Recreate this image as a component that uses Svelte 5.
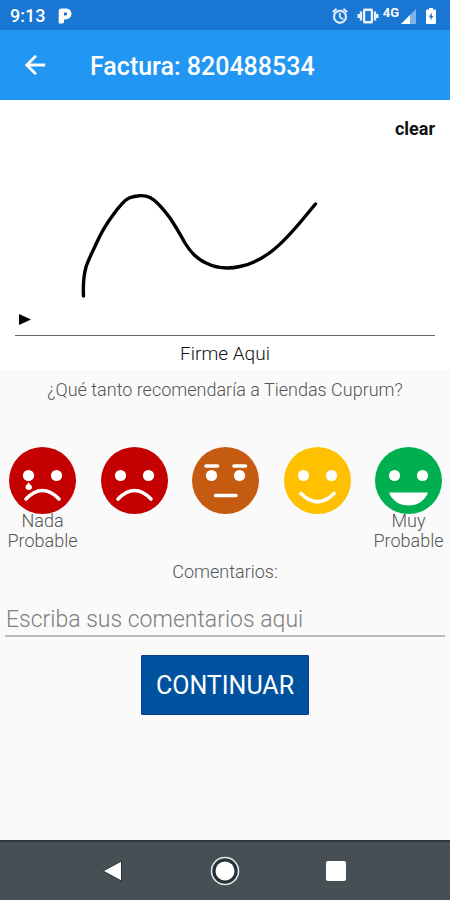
<script>
  const faces = [
    { kind: 'crying', color: '#c40000', label: 'Nada Probable', caption: true },
    { kind: 'sad', color: '#c40000', label: 'Poco probable', caption: false },
    { kind: 'neutral', color: '#c55a11', label: 'Neutral', caption: false },
    { kind: 'happy', color: '#ffc000', label: 'Algo probable', caption: false },
    { kind: 'delighted', color: '#00b050', label: 'Muy Probable', caption: true }
  ];
  let signed = $state(true);
  let rating = $state('');
  let comment = $state('');
</script>

<div class="screen">
  <div class="status">
    <span class="time">9:13</span>
    <svg class="pandora" width="14" height="16" viewBox="0 0 14 16" aria-hidden="true">
      <path fill="#fff" fill-rule="evenodd" d="M3.5 0.5H7.5C11.3 0.5 13.5 2.700 13.5 5.800C13.500 9.300 10.800 11.500 7.400 11.500H6V13.500C6 15 5.200 15.600 4 15.600H0.700V3.500C0.700 1.500 1.500 0.500 3.500 0.500ZM6 4.600V7.600H7C8.300 7.600 9.100 7 9.100 6C9.100 5 8.400 4.600 7.300 4.600Z" />
    </svg>
    <div class="indicators">
      <svg width="18" height="18" viewBox="0 0 24 24" aria-hidden="true">
        <path fill="#e8f1fb" stroke="#e8f1fb" stroke-width="0.800" d="M22 5.72l-4.6-3.86-1.29 1.53 4.6 3.86L22 5.72zM7.88 3.39L6.6 1.86 2 5.71l1.29 1.53 4.59-3.85zM12.5 8H11v6l4.75 2.85.75-1.23-4-2.37V8zM12 4c-4.97 0-9 4.03-9 9s4.02 9 9 9a9 9 0 0 0 0-18zm0 16c-3.87 0-7-3.13-7-7s3.13-7 7-7 7 3.13 7 7-3.13 7-7 7z" />
      </svg>
      <svg class="vibrate" width="22" height="18" viewBox="0 0 22 18" aria-hidden="true">
        <path fill="#e8f1fb" fill-rule="evenodd" d="M7.5 1.5H14.5Q16 1.5 16 3V15Q16 16.5 14.5 16.5H7.5Q6 16.5 6 15V3Q6 1.5 7.5 1.5ZM8.3 4V14H13.7V4Z" />
        <path fill="#e8f1fb" d="M2.800 4.500H5.200V13.500H2.800ZM0.500 7H2.800V11H0.500ZM16.800 4.500H19.200V13.500H16.800ZM19.200 7H21.500V11H19.200Z" />
      </svg>
      <span class="network">4G</span>
      <svg class="signal" width="15" height="15" viewBox="0 0 15 15" aria-hidden="true">
        <path fill="#7fb3e8" d="M0 15L15 0V15Z" />
        <path fill="#fff" d="M0 15L9 6V15Z" />
      </svg>
      <svg class="battery" width="10" height="16" viewBox="0 0 10 16" aria-hidden="true">
        <path fill="#fff" d="M3 0H7V1.5H9Q10 1.5 10 2.5V15Q10 16 9 16H1Q0 16 0 15V2.5Q0 1.5 1 1.5H3Z" />
        <path fill="#1976d2" d="M5.800 4.500L2.800 9.300H4.600V12.500L7.300 8H5.800Z" />
      </svg>
    </div>
  </div>

  <header>
    <button class="back" aria-label="Volver">
      <svg width="30" height="30" viewBox="0 0 24 24" aria-hidden="true">
        <path fill="#fff" stroke="#fff" stroke-width="0.300" d="M20 11H7.83l5.59-5.59L12 4l-8 8 8 8 1.41-1.41L7.83 13H20v-2z" />
      </svg>
    </button>
    <h1>Factura: 820488534</h1>
  </header>

  <section class="signature">
    <button class="clear" onclick={() => (signed = false)}>clear</button>
    <svg class="ink" viewBox="0 0 450 120" role="img" aria-label="Firma">
      {#if signed}
        <path
          d="M83.500 116C83 106 83 98 86 87C89 78 93 71 97 62C102 51 107 43 113 35C118 28 123 21 129 18C135 15.500 144 14.500 150 17.500C157 21 164 30 170 38C176 47 180 54 185 63C191 73 197 79 206 83C216 88 229 89 240 86.500C252 84 263 78 272 71C289 58 301 41 315.500 24"
          fill="none" stroke="#000" stroke-width="3.400" stroke-linecap="round" stroke-linejoin="round" />
      {/if}
    </svg>
    <div class="line">
      <svg width="12" height="11" viewBox="0 0 12 11" aria-hidden="true"><path d="M0 0L12 5.500L0 11Z" /></svg>
    </div>
    <p>Firme Aqui</p>
  </section>

  <main>
    <p class="question">¿Qué tanto recomendaría a Tiendas Cuprum?</p>
    <div class="faces">
      {#each faces as face}
        <button class="face" aria-label={face.label} aria-pressed={rating === face.kind} onclick={() => (rating = face.kind)}>
          <svg width="67" height="67" viewBox="0 0 67 67" aria-hidden="true">
            <circle cx="33.5" cy="33.5" r="33.5" fill={face.color} />
            <circle cx="19.500" cy="28.500" r="5.600" fill="#fff" />
            <circle cx="47.500" cy="28.500" r="5.600" fill="#fff" />
            {#if face.kind === 'crying'}
              <path d="M19.500 35C20.300 37.500 23 38 23 40A3.200 2.800 0 0 1 16.500 40C16.500 38 18.700 37.500 19.500 35Z" fill="#fff" />
            {/if}
            {#if face.kind === 'crying' || face.kind === 'sad'}
              <path d="M17 52Q33.500 35 50 52" class="mouth" />
            {:else if face.kind === 'neutral'}
              <path d="M14 19H25.500M42 19H53.500M23.500 48.500H44" class="mouth" />
            {:else if face.kind === 'happy'}
              <path d="M17 46.500Q33.500 63 50 46.500" class="mouth" />
            {:else}
              <path d="M14 45.500H53C50 54 42 58.500 33.500 58.500S17 54 14 45.500Z" fill="#fff" />
            {/if}
          </svg>
          {#if face.caption}<span>{face.label}</span>{/if}
        </button>
      {/each}
    </div>
    <label for="comments">Comentarios:</label>
    <input id="comments" type="text" placeholder="Escriba sus comentarios aqui" bind:value={comment} />
    <button class="continue">CONTINUAR</button>
  </main>

  <nav>
    <button aria-label="Atrás">
      <svg width="30" height="30" viewBox="0 0 30 30"><path d="M22.500 5V25L4 15Z" fill="#fff" stroke="#263238" stroke-width="1" /></svg>
    </button>
    <button aria-label="Inicio">
      <svg width="30" height="30" viewBox="0 0 30 30">
        <circle cx="15" cy="15" r="13.500" fill="#263238" stroke="#e4e8e9" stroke-width="1.600" />
        <circle cx="15" cy="15" r="9.500" fill="#fff" />
      </svg>
    </button>
    <button aria-label="Recientes">
      <svg width="30" height="30" viewBox="0 0 30 30"><rect x="5" y="5" width="20" height="20" rx="2" fill="#fff" /></svg>
    </button>
  </nav>
</div>

<style>
  :global(body) { margin: 0; }
  .screen {
    min-height: 100vh;
    display: flex;
    flex-direction: column;
    background: #fafafa;
    font-family: Roboto, "Liberation Sans", sans-serif;
    font-size: 18px;
    line-height: 20px;
    color: #555;
  }
  .screen * { box-sizing: border-box; }
  svg { display: block; flex: none; }
  p, h1 { margin: 0; }
  button { border: 0; padding: 0; background: none; font: inherit; color: inherit; cursor: pointer; }

  .status {
    height: 30px;
    display: flex;
    align-items: center;
    padding: 2px 14px 0 10px;
    background: #1976d2;
    color: #fff;
  }
  .time { font-size: 18px; font-weight: 500; }
  .pandora { margin-left: 13px; }
  .indicators { margin-left: auto; display: flex; align-items: center; }
  .vibrate { margin-left: 8px; }
  .network { margin-left: 4px; padding-bottom: 6px; font-size: 13px; line-height: 14px; font-weight: 700; }
  .signal { margin-left: 2px; }
  .battery { margin-left: 10px; }

  header {
    height: 70px;
    display: flex;
    align-items: center;
    gap: 40px;
    padding: 0 20px;
    background: #2196f3;
    color: #fff;
  }
  h1 { font-size: 25px; line-height: 30px; font-weight: 500; padding-top: 4px; }

  .signature {
    display: flex;
    flex-direction: column;
    padding-bottom: 6px;
    background: #fff;
    color: #111;
  }
  .clear { align-self: flex-end; margin: 19px 15px 0; font-weight: 700; }
  .ink { width: 100%; max-width: 450px; margin-top: 41px; }
  .line { margin: 0 15px; padding: 14px 4px 10px; border-bottom: 1px solid #666; }
  .line + p { margin-top: 8px; font-size: 19px; font-weight: 300; text-align: center; }

  main { flex: 1; display: flex; flex-direction: column; font-weight: 300; }
  .question { margin-top: 10px; text-align: center; }
  .faces { display: flex; justify-content: space-between; align-items: flex-start; margin-top: 47px; padding: 0 8px 0 9px; }
  .face { width: 67px; display: flex; flex-direction: column; align-items: center; }
  .face span { width: 72px; margin-top: -3px; }
  .mouth { fill: none; stroke: #fff; stroke-width: 3.6; stroke-linecap: round; }
  label { margin-top: 11px; text-align: center; }
  input {
    height: 40px;
    margin: 15px 5px 0;
    padding: 6px 1px 0;
    border: 0;
    border-bottom: 2px solid #bbb;
    border-radius: 0;
    outline: 0;
    background: none;
    font: inherit;
    font-size: 23px;
    color: #333;
  }
  input::placeholder { color: #808080; opacity: 1; }
  .continue {
    align-self: center;
    height: 60px;
    margin: 18px 0;
    padding: 2px 14px 0;
    border: 1px solid #0a3f94;
    border-radius: 1px;
    background: #00529f;
    color: #fff;
    font-size: 25px;
    font-weight: 400;
  }

  nav {
    height: 60px;
    display: flex;
    justify-content: center;
    align-items: center;
    gap: 81px;
    border-top: 2px solid #2b383c;
    background: #454f54;
  }
</style>
